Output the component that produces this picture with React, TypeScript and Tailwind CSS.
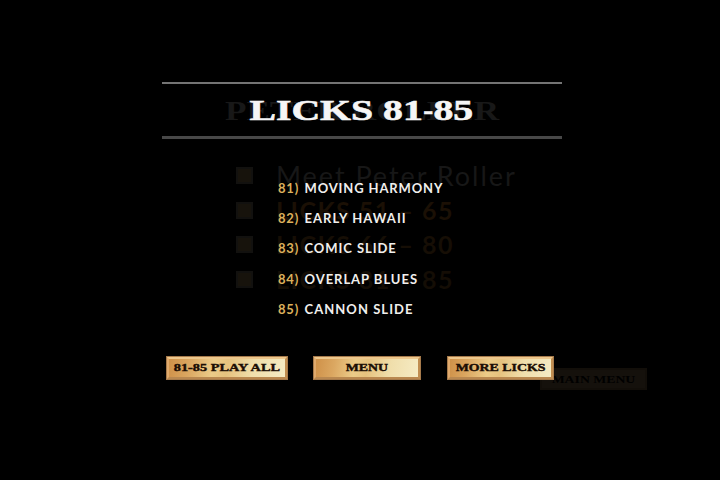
import React from "react";

const licks = [
  { n: "81)", title: "MOVING HARMONY", spacing: "tracking-[0.87px]" },
  { n: "82)", title: "EARLY HAWAII", spacing: "tracking-[1.05px]" },
  { n: "83)", title: "COMIC SLIDE", spacing: "tracking-[0.94px]" },
  { n: "84)", title: "OVERLAP BLUES", spacing: "tracking-[0.96px]" },
  { n: "85)", title: "CANNON SLIDE", spacing: "tracking-[1.05px]" },
];

const serif = "font-['Liberation_Serif',serif] font-bold whitespace-nowrap";

function GoldButton({ label, width, stretch }: { label: string; width: string; stretch: string }) {
  return (
    <button
      className={`flex h-6 items-center justify-center border-[3px] border-t-[#edc78c] border-r-[#c08d50] border-b-[#b98850] border-l-[#dfa96c] bg-[linear-gradient(100deg,#cf9149_0%,#dba761_18%,#eccb88_38%,#e6c27e_50%,#f0deab_72%,#f5ebc4_100%)] outline-1 -outline-offset-1 outline-[#a67a4b] ${width}`}
    >
      <span className={`${serif} block text-[11px] leading-none text-[#1b0d04] [-webkit-text-stroke:0.4px_#1b0d04] ${stretch}`}>{label}</span>
    </button>
  );
}

const ghostRows = [
  { top: "top-[163px]", label: "Meet Peter Roller", style: "font-normal text-[27px] text-[#171717] tracking-[1.95px]" },
  { top: "top-[198px]", label: "LICKS 51 – 65", style: "font-bold text-[25px] text-[#1b1005] tracking-[1.5px]" },
  { top: "top-[232px]", label: "LICKS 66 – 80", style: "font-bold text-[25px] text-[#160e05] tracking-[1.5px]" },
  { top: "top-[267px]", label: "LICKS 81 – 85", style: "font-bold text-[25px] text-[#140d05] tracking-[1.5px]" },
];

/* Faint remains of the previous menu, still fading out under the current one. */
function FadingMenu() {
  return (
    <div className="pointer-events-none absolute inset-0" aria-hidden="true">
      <div className={`${serif} absolute top-[96px] left-[225px] origin-left scale-x-[1.3] text-[27px] leading-[30px] text-[#181818]`}>
        PETER ROLLER
      </div>
      {ghostRows.map((row) => (
        <div key={row.label} className={`absolute left-[236px] flex h-[25px] items-center ${row.top}`}>
          <span className="size-[17px] border-2 border-[#12110f] bg-[#17130c]" />
          <span className={`ml-[23px] font-['Lato',sans-serif] leading-none whitespace-nowrap ${row.style}`}>
            {row.label}
          </span>
        </div>
      ))}
      <div className="absolute top-[368px] left-[540px] flex h-[22px] w-[107px] items-center justify-center border-2 border-[#120e09] bg-[#15110c]">
        <span className={`${serif} block scale-x-[1.25] text-[11px] leading-none text-black`}>MAIN MENU</span>
      </div>
    </div>
  );
}

export default function App() {
  return (
    <main className="relative h-[480px] w-[720px] overflow-hidden bg-black">
      <FadingMenu />
      <div className="relative flex flex-col pt-[82px] pl-[162px]">
        <header className="flex h-[57px] w-[400px] items-center justify-center border-t-2 border-b-3 border-t-[#747474] border-b-[#484848]">
          <h1 className={`${serif} scale-x-[1.325] pr-px text-[30px] leading-none text-[#f6f6f6] [-webkit-text-stroke:0.6px_#f6f6f6]`}>
            LICKS 81<span className="mx-[-1px] inline-block scale-x-75">-</span>85
          </h1>
        </header>
        <ul className="mt-[34.5px] ml-[116px] font-['Lato',sans-serif] text-[13px] font-bold">
          {licks.map((l) => (
            <li key={l.n} className="flex h-[30.3px] items-center whitespace-nowrap">
              <span className="w-[26.5px] tracking-[0.8px] text-[#dcb05c]">{l.n}</span>
              <span className={`text-[#f0efed] ${l.spacing}`}>{l.title}</span>
            </li>
          ))}
        </ul>
        <nav className="mt-[31px] ml-1 flex">
          <GoldButton label="81-85 PLAY ALL" width="w-[122px]" stretch="scale-x-[1.3]" />
          <GoldButton label="MENU" width="ml-[25px] w-[108px]" stretch="scale-x-[1.26]" />
          <GoldButton label="MORE LICKS" width="ml-[26px] w-[107px]" stretch="scale-x-[1.26]" />
        </nav>
      </div>
    </main>
  );
}
